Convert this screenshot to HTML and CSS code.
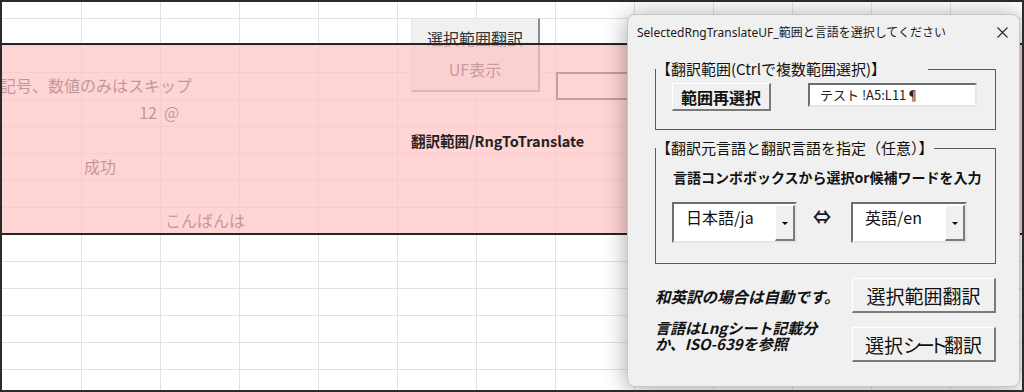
FILE: index.html
```html
<!DOCTYPE html>
<html lang="ja">
<head>
    <meta charset="UTF-8">
    <meta name="viewport" content="width=device-width, initial-scale=1.0">
    <title>SelectedRngTranslateUF</title>
    <link rel="stylesheet" href="styles.css">
</head>
<body>
    <div class="screen">
        <div class="sheet">
            <div class="cell skip">記号、数値のみはスキップ</div>
            <div class="cell num">12</div>
            <div class="cell at">@</div>
            <div class="cell ok">成功</div>
            <div class="cell hello">こんばんは</div>
        </div>

        <div class="sheet-btn">
            <span>選択範囲翻訳</span>
            <span>UF表示</span>
        </div>
        <div class="sheet-box"></div>
        <div class="selection"></div>
        <div class="range-label">翻訳範囲/RngToTranslate</div>

        <div class="dialog">
            <div class="titlebar">
                <span class="title">SelectedRngTranslateUF_範囲と言語を選択してください</span>
                <svg class="close" width="11" height="11" viewBox="0 0 11 11">
                    <path d="M0.5 0.5 L10.5 10.5 M10.5 0.5 L0.5 10.5" stroke="#2a2a2a" stroke-width="1.1" fill="none"/>
                </svg>
            </div>
            <div class="dialog-body">
                <fieldset class="frame frame-range">
                    <legend>【翻訳範囲(Ctrlで複数範囲選択)】</legend>
                    <div class="range-row">
                        <button class="btn btn-reselect">範囲再選択</button>
                        <div class="textbox">テスト !A5:L11¶</div>
                    </div>
                </fieldset>

                <fieldset class="frame frame-lang">
                    <legend>【翻訳元言語と翻訳言語を指定（任意）】</legend>
                    <p class="hint">言語コンボボックスから選択or候補ワードを入力</p>
                    <div class="lang-row">
                        <div class="combo combo-src"><span>日本語/ja</span><i class="drop"></i></div>
                        <span class="swap">⇔</span>
                        <div class="combo combo-dst"><span>英語/en</span><i class="drop"></i></div>
                    </div>
                </fieldset>

                <div class="action-row">
                    <p class="note">和英訳の場合は自動です。</p>
                    <button class="btn btn-action">選択範囲翻訳</button>
                </div>
                <div class="action-row top">
                    <p class="note two-line">言語はLngシート記載分<br>か、ISO-639を参照</p>
                    <button class="btn btn-action">選択<span class="kana">シート</span>翻訳</button>
                </div>
            </div>
        </div>

        <div class="frame-edge"></div>
    </div>
</body>
</html>
```

FILE: styles.css
```css
* {
    box-sizing: border-box;
}
body {
    margin: 0;
    background-color: #fff;
    font-family: "Noto Sans CJK JP", "Noto Sans", sans-serif;
    color: #111;
}
.screen {
    position: relative;
    width: 1024px;
    height: 392px;
    padding: 2px;
    overflow: hidden;
    background-color: #fff;
}

/* worksheet */
.sheet {
    display: grid;
    grid-template-columns: repeat(13, 79px);
    grid-template-rows: 16px repeat(14, 27px);
    height: 388px;
    overflow: hidden;
    background-image:
        repeating-linear-gradient(to right, transparent 0 78px, #e2e2e2 78px 79px),
        repeating-linear-gradient(to bottom, transparent 0 26px, #e2e2e2 26px 27px);
    background-position: 1px 0, 0 -10px;
}
.cell {
    font-size: 16px;
    line-height: 27px;
    color: #1e1e1e;
    white-space: nowrap;
}
.skip {
    grid-column: 1 / span 4;
    grid-row: 4;
    margin-left: -2px;
}
.num {
    grid-column: 2;
    grid-row: 5;
    text-align: right;
    padding-right: 3px;
}
.at {
    grid-column: 3;
    grid-row: 5;
    padding-left: 4px;
}
.ok {
    grid-column: 2;
    grid-row: 7;
    padding-left: 3px;
}
.hello {
    grid-column: 3 / span 2;
    grid-row: 9;
    padding-left: 5px;
}

/* shapes floating on the sheet */
.sheet-btn {
    position: absolute;
    left: 411px;
    top: 18px;
    width: 129px;
    height: 74px;
    display: flex;
    flex-direction: column;
    align-items: center;
    padding-top: 4px;
    background-color: #f0f0f0;
    border-top: 1px solid #e4e4e4;
    border-left: 1px solid #e4e4e4;
    border-right: 2px solid #8c8c8c;
    border-bottom: 2px solid #8c8c8c;
    font-size: 16px;
    line-height: 31px;
    color: #333;
}
.sheet-box {
    position: absolute;
    left: 556px;
    top: 72px;
    width: 100px;
    height: 28px;
    border: 2px solid #3a3a3a;
}
.selection {
    position: absolute;
    left: 0;
    right: 0;
    top: 43px;
    height: 192px;
    border-top: 2px solid #262626;
    border-bottom: 2px solid #262626;
    background-color: rgba(255, 196, 196, 0.72);
}
.range-label {
    position: absolute;
    left: 411px;
    top: 131px;
    font-size: 14.5px;
    font-weight: bold;
    line-height: 20px;
    color: #222;
}

/* userform */
.dialog {
    position: absolute;
    left: 627px;
    top: 14px;
    width: 393px;
    height: 373px;
    background-color: #f0f0f0;
    border: 1px solid #c6c6c6;
    border-radius: 8px;
    box-shadow: 0 2px 24px rgba(0, 0, 0, 0.36);
}
.titlebar {
    height: 34px;
    display: flex;
    justify-content: space-between;
    align-items: center;
    padding: 0 11px 0 9px;
}
.title {
    font-family: "Noto Sans", "Noto Sans CJK JP", sans-serif;
    font-size: 12px;
    color: #1a1a1a;
}
.dialog-body {
    padding: 0 23px 0 27px;
}
.frame {
    margin: 0;
    padding: 0;
    min-inline-size: 0;
    border: 1px solid #5a5a5a;
}
.frame legend {
    padding: 0;
    line-height: 18px;
    color: #111;
}
.frame-range {
    margin-top: 11px;
}
.frame-range legend {
    font-size: 15px;
    padding-right: 42px;
}
.range-row {
    display: flex;
    align-items: flex-start;
    gap: 37px;
    padding: 5px 18px 18px 16px;
}
.btn {
    font-family: inherit;
    color: #111;
    background-color: #f0f0f0;
    border-top: 1px solid #fff;
    border-left: 1px solid #fff;
    border-right: 2px solid #7a7a7a;
    border-bottom: 2px solid #7a7a7a;
    padding: 0;
    line-height: 1;
}
.btn-reselect {
    width: 99px;
    height: 28px;
    font-size: 16px;
    font-weight: bold;
}
.textbox {
    width: 169px;
    height: 24px;
    padding-left: 10px;
    background-color: #fff;
    border: 2px solid;
    border-color: #6e6e6e #e6e6e6 #e6e6e6 #6e6e6e;
    font-size: 13px;
    line-height: 19px;
    color: #222;
}
.frame-lang {
    margin-top: 9px;
}
.frame-lang legend {
    font-size: 15px;
}
.hint {
    margin: 10px 0 0 17px;
    font-size: 14px;
    font-weight: bold;
    line-height: 20px;
}
.lang-row {
    display: flex;
    align-items: flex-start;
    margin-top: 15px;
    padding: 0 0 20px 16px;
}
.combo {
    height: 41px;
    display: flex;
    justify-content: space-between;
    align-items: flex-start;
    background-color: #fff;
    border: 2px solid;
    border-color: #6e6e6e #e6e6e6 #e6e6e6 #6e6e6e;
    font-size: 16px;
    line-height: 20px;
}
.combo span {
    padding: 3px 0 0 12px;
}
.combo-src {
    width: 125px;
}
.combo-dst {
    width: 116px;
}
.drop {
    width: 20px;
    height: 36px;
    margin-top: 1px;
    display: flex;
    justify-content: center;
    align-items: center;
    background-color: #f0f0f0;
    border-top: 1px solid #fff;
    border-left: 1px solid #fff;
    border-right: 2px solid #7a7a7a;
    border-bottom: 2px solid #7a7a7a;
}
.drop::after {
    content: "";
    border-left: 3px solid transparent;
    border-right: 3px solid transparent;
    border-top: 3px solid #000;
    margin-top: 2px;
}
.swap {
    margin: 4px 20px 0 16px;
    font-size: 18px;
    font-weight: bold;
    line-height: 20px;
    color: #1a1a2e;
}
.action-row {
    display: flex;
    justify-content: space-between;
    align-items: center;
    margin-top: 14px;
}
.action-row.top {
    align-items: flex-start;
}
.note {
    margin: 0;
    font-size: 15.5px;
    font-weight: bold;
    font-style: italic;
    line-height: 18px;
    color: #111;
}
.note.two-line {
    font-size: 15px;
    line-height: 16px;
    margin-top: -7px;
}
.btn-action {
    width: 144px;
    height: 35px;
    font-size: 19px;
}
.kana {
    letter-spacing: -6px;
    margin-right: 2px;
}

.frame-edge {
    position: absolute;
    inset: 0;
    border: 2px solid #2b2b2b;
    pointer-events: none;
}
```
